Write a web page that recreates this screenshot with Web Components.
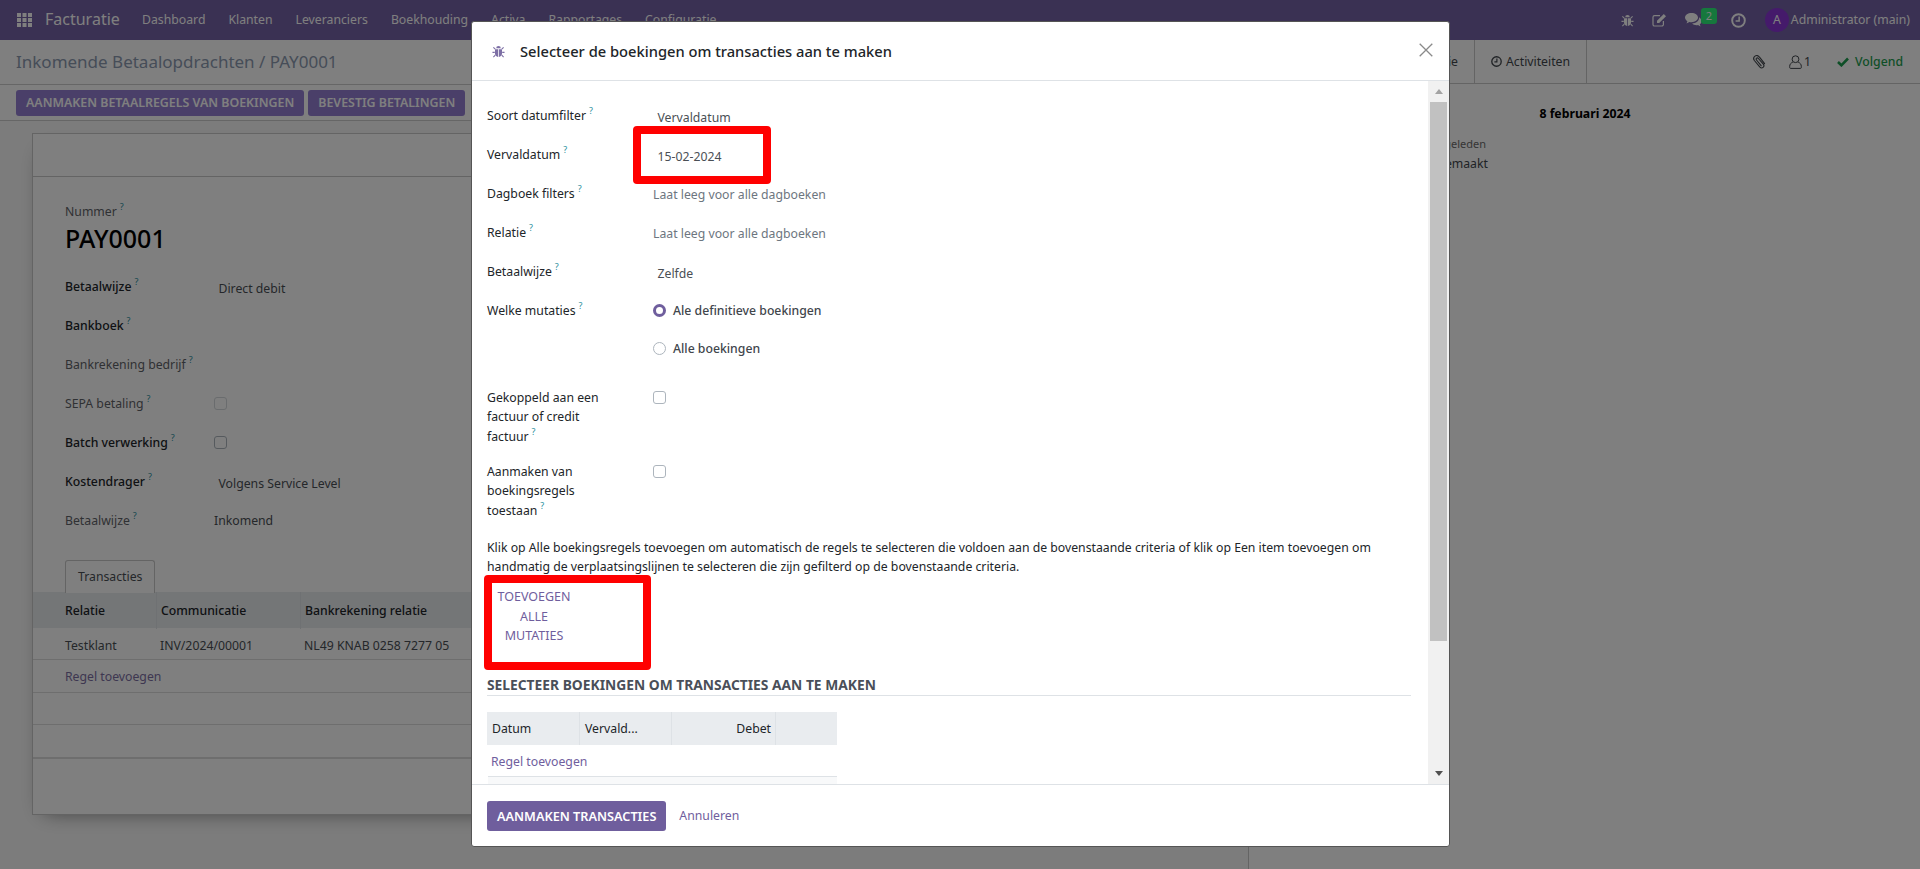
<!DOCTYPE html>
<html lang="nl">
<head>
<meta charset="utf-8">
<title>Facturatie</title>
<style>
    html, body { margin: 0; height: 100%; overflow: hidden; }
    body { font: 12.25px/19.5px "Noto Sans", "Open Sans", sans-serif; color: #212529; background: #f9f9f9; }
</style>
</head>
<body>
<app-page></app-page>

<script>
// ICONS (small fa-like set)
const ICONS = {
    grid: `<svg viewBox="0 0 15 14" width="15" height="14" fill="currentColor"><rect width="4" height="4"/><rect x="5.5" width="4" height="4"/><rect x="11" width="4" height="4"/><rect y="5" width="4" height="4"/><rect x="5.5" y="5" width="4" height="4"/><rect x="11" y="5" width="4" height="4"/><rect y="10" width="4" height="4"/><rect x="5.5" y="10" width="4" height="4"/><rect x="11" y="10" width="4" height="4"/></svg>`,
    bug: `<svg viewBox="0 0 14 14" width="13" height="13"><g fill="none" stroke="currentColor" stroke-width="1.2"><path d="M3.5 4.5 1.5 2.5M10.5 4.5l2-2M3 8H.5M11 8h2.500M3.500 11l-2 2M10.500 11l2 2"/></g><path fill="currentColor" d="M4.500 3.600a2.500 2.500 0 0 1 5 0zM3.200 4.500h3.400v8.500C4.500 12.800 3.200 11.200 3.200 9zM7.400 4.500h3.400V9c0 2.200-1.300 3.800-3.400 4z"/></svg>`,
    edit: `<svg viewBox="0 0 15 14" width="15" height="14"><path fill="none" stroke="currentColor" stroke-width="1.200" d="M8 2.600H2.600A1.600 1.600 0 0 0 1 4.200v7.200A1.600 1.600 0 0 0 2.600 13h7.200a1.600 1.600 0 0 0 1.600-1.600V8"/><path fill="currentColor" d="M5 7.800 11.800 1l2.200 2.200L7.200 10H5z"/></svg>`,
    comments: `<svg viewBox="0 0 17 14" width="17" height="14" fill="currentColor"><path d="M6.500 0C3 0 0 2 0 4.600c0 1.500 1 2.800 2.400 3.600L1.500 10.400l2.900-1.500c.7.200 1.400.300 2.100.300 3.600 0 6.500-2 6.500-4.600S10.100 0 6.500 0z"/><path d="M14 4.200c.1.300.1.500.1.800 0 3-3.100 5.300-7 5.500 1 1 2.700 1.700 4.400 1.700.5 0 1-.1 1.500-.2l2.500 1.500-.7-2.200c1.100-.7 1.700-1.700 1.700-2.800 0-1.800-1-3.300-2.500-4.300z"/></svg>`,
    clock: `<svg viewBox="0 0 14 14" width="15" height="15"><circle cx="7" cy="7" r="5.900" fill="none" stroke="currentColor" stroke-width="1.800"/><path fill="none" stroke="currentColor" stroke-width="1.400" d="M7.600 3.200v4.300H4.300"/></svg>`,
    clockThin: `<svg viewBox="0 0 14 14" width="11" height="11"><circle cx="7" cy="7" r="6" fill="none" stroke="currentColor" stroke-width="1.700"/><path fill="none" stroke="currentColor" stroke-width="1.500" d="M7.500 3.200v4.300H4.300"/></svg>`,
    clip: `<svg viewBox="0 0 14 15" width="14" height="15"><path fill="none" stroke="currentColor" stroke-width="1.100" stroke-linecap="round" d="M12.600 9.600 7.500 3.200C6.400 1.600 4.500 1 3 2.100 1.500 3.200 1.300 5 2.400 6.500l5.300 6.400c.9 1 2.300 1.400 3.400.5 1.100-.9 1-2.200.2-3.200L6.400 4.500c-.5-.6-1.200-.8-1.800-.3-.6.500-.6 1.200-.1 1.800l4.600 5.700"/></svg>`,
    user: `<svg viewBox="0 0 13 14" width="13" height="14"><g fill="none" stroke="currentColor" stroke-width="1"><circle cx="6.500" cy="4.200" r="3.400"/><path d="M3.800 7.200C2 7.800.7 9.300.7 11.300v1.200c0 .5.300.9.800.9h10c.5 0 .8-.4.800-.9v-1.200c0-2-1.300-3.500-3.100-4.100"/></g></svg>`,
    check: `<svg viewBox="0 0 12 10" width="12" height="10"><path fill="none" stroke="currentColor" stroke-width="2.600" d="M1 5l3.400 3.300L11 1.500"/></svg>`,
    close: `<svg viewBox="0 0 14 14" width="14" height="14"><path fill="none" stroke="currentColor" stroke-width="1.300" d="M.7.700l12.600 12.600M13.300.700.7 13.300"/></svg>`
};

// FIELD LABEL
class FieldLabel extends HTMLElement {
    constructor() {
        super();
        this.attachShadow({ mode: "open" });
        this.shadowRoot.innerHTML = `
            <style>
                :host { display: block; color: #5f6368; }
                :host([strong]) { color: #212529; font-weight: 500; }
                :host([plain]) { color: #212529; }
                sup {
                    font-size: 9px;
                    line-height: 0;
                    color: #2c8f9e;
                    margin-left: 3px;
                    font-weight: 400;
                    vertical-align: 6px;
                }
            </style>
            <slot></slot><sup>?</sup>
        `;
    }
}
customElements.define("field-label", FieldLabel);

// FORM ROW
class FormRow extends HTMLElement {
    constructor() {
        super();
        this.attachShadow({ mode: "open" });
        this.shadowRoot.innerHTML = `
            <style>
                :host {
                    display: grid;
                    grid-template-columns: var(--label-w, 166px) 1fr;
                    padding: 9.75px 0;
                }
                :host([tall]) { padding-bottom: 6px; }
                :host([open]) { padding-bottom: 1px; }
                .label { padding-right: var(--label-pad, 30px); }
            </style>
            <div class="label"><slot name="label"></slot></div>
            <div><slot></slot></div>
        `;
    }
}
customElements.define("form-row", FormRow);

// FIELD VALUE
class FieldValue extends HTMLElement {
    constructor() {
        super();
        this.attachShadow({ mode: "open" });
        this.shadowRoot.innerHTML = `
            <style>
                :host { display: block; color: #4a4f55; position: relative; top: 2px; }
                :host([inset]) { padding-left: 4.500px; }
                :host([empty]) { color: #6d7680; top: 1px; }
                :host([flat]) { top: 0; }
            </style>
            <slot></slot>
        `;
    }
}
customElements.define("field-value", FieldValue);

// CHECK BOX
class CheckBox extends HTMLElement {
    constructor() {
        super();
        this.attachShadow({ mode: "open" });
        this.shadowRoot.innerHTML = `
            <style>
                :host {
                    display: block;
                    box-sizing: border-box;
                    width: 13px;
                    height: 13px;
                    margin-top: 3px;
                    border: 1px solid #adb5bd;
                    border-radius: 3px;
                    background: #fff;
                }
                :host([faint]) { border-color: #d4d8dc; }
            </style>
        `;
    }
}
customElements.define("check-box", CheckBox);

// RADIO ITEM
class RadioItem extends HTMLElement {
    constructor() {
        super();
        this.attachShadow({ mode: "open" });
        this.shadowRoot.innerHTML = `
            <style>
                :host {
                    display: flex;
                    align-items: center;
                    gap: 7px;
                    color: #41464c;
                    margin-bottom: 18.5px;
                    font-weight: 500;
                }
                i {
                    box-sizing: border-box;
                    width: 13px;
                    height: 13px;
                    border: 1px solid #adb5bd;
                    border-radius: 50%;
                    background: #fff;
                }
                :host([on]) i { border: 3.500px solid #6f5e9d; }
            </style>
            <i></i><slot></slot>
        `;
    }
}
customElements.define("radio-item", RadioItem);

// RED MARK (annotation drawn over the screenshot)
class RedMark extends HTMLElement {
    constructor() {
        super();
        this.attachShadow({ mode: "open" });
        this.shadowRoot.innerHTML = `
            <style>
                :host { display: block; position: relative; }
                .frame {
                    position: absolute;
                    inset: var(--inset);
                    border: 8px solid #ff0000;
                    border-radius: 4px;
                    pointer-events: none;
                }
            </style>
            <slot></slot>
            <div class="frame"></div>
        `;
    }
}
customElements.define("red-mark", RedMark);

// FAKE SCROLLBAR
class FakeScrollbar extends HTMLElement {
    constructor() {
        super();
        this.attachShadow({ mode: "open" });
        this.shadowRoot.innerHTML = `
            <style>
                :host {
                    display: flex;
                    flex-direction: column;
                    align-items: center;
                    flex: none;
                    width: 21px;
                    background: #f1f1f1;
                }
                .btn { flex: none; height: 21px; display: flex; align-items: center; justify-content: center; }
                .up { width: 0; height: 0; border: 4.500px solid transparent; border-top: 0; border-bottom: 5px solid #a3a3a3; }
                .down { width: 0; height: 0; border: 4.500px solid transparent; border-bottom: 0; border-top: 5px solid #505050; }
                .thumb { flex: none; width: 17px; height: 539px; background: #c1c1c1; }
                .rest { flex: 1; }
            </style>
            <div class="btn"><div class="up"></div></div>
            <div class="thumb"></div>
            <div class="rest"></div>
            <div class="btn"><div class="down"></div></div>
        `;
    }
}
customElements.define("fake-scrollbar", FakeScrollbar);

// NAVBAR
class AppNavbar extends HTMLElement {
    constructor() {
        super();
        this.attachShadow({ mode: "open" });
        this.shadowRoot.innerHTML = `
            <style>
                :host {
                    display: flex;
                    align-items: center;
                    flex: none;
                    height: 40px;
                    background: #7462a6;
                    color: #fff;
                    padding: 0 10px 0 17px;
                    box-sizing: border-box;
                    position: relative;
                }
                .brand { font-size: 16px; margin-left: 13px; width: 97px; }
                nav { display: flex; gap: 23px; }
                .grid, .icon { display: flex; }
                .right { margin-left: auto; display: flex; align-items: center; }
                .icon { position: relative; }
                .bug { margin-right: 18px; }
                .edit { margin-right: 18px; }
                .comments { margin-right: 29px; }
                .clock { margin-right: 19px; }
                .badge {
                    position: absolute;
                    left: 16px;
                    top: -5px;
                    width: 16px;
                    height: 16px;
                    border-radius: 3px;
                    background: #2cf07a;
                    color: #fff;
                    font-size: 11px;
                    line-height: 15px;
                    text-align: center;
                }
                .avatar {
                    width: 24px;
                    height: 24px;
                    border-radius: 50%;
                    background: #8a35d6;
                    text-align: center;
                    line-height: 24px;
                    margin-right: 2px;
                }
            </style>
            <span class="grid">${ICONS.grid}</span>
            <span class="brand">Facturatie</span>
            <nav>
                <span>Dashboard</span>
                <span>Klanten</span>
                <span>Leveranciers</span>
                <span>Boekhouding</span>
                <span>Activa</span>
                <span>Rapportages</span>
                <span>Configuratie</span>
            </nav>
            <div class="right">
                <span class="icon bug">${ICONS.bug}</span>
                <span class="icon edit">${ICONS.edit}</span>
                <span class="icon comments">${ICONS.comments}<span class="badge">2</span></span>
                <span class="icon clock">${ICONS.clock}</span>
                <span class="avatar">A</span>
                <span>Administrator (main)</span>
            </div>
        `;
    }
}
customElements.define("app-navbar", AppNavbar);

// CONTROL PANEL
class ControlPanel extends HTMLElement {
    constructor() {
        super();
        this.attachShadow({ mode: "open" });
        this.shadowRoot.innerHTML = `
            <style>
                :host { display: block; background: #fff; border-bottom: 1px solid #ccc; }
                .crumbs {
                    height: 44px;
                    padding: 0 16px;
                    display: flex;
                    align-items: center;
                    font-size: 17px;
                    color: #8c9ab0;
                    border-bottom: 1px solid #ccc;
                }
                .buttons { display: flex; gap: 4px; padding: 5px 16px 4px; }
                button {
                    height: 26px;
                    padding: 0 10px;
                    border: 0;
                    border-radius: 3px;
                    background: #947fd2;
                    color: #fff;
                    font: 600 12.4px/26px "Noto Sans", sans-serif;
                    white-space: nowrap;
                }
            </style>
            <div class="crumbs">Inkomende Betaalopdrachten / PAY0001</div>
            <div class="buttons">
                <button>AANMAKEN BETAALREGELS VAN BOEKINGEN</button>
                <button>BEVESTIG BETALINGEN</button>
            </div>
        `;
    }
}
customElements.define("control-panel", ControlPanel);

// FORM SHEET
class FormSheet extends HTMLElement {
    constructor() {
        super();
        this.attachShadow({ mode: "open" });
        this.shadowRoot.innerHTML = `
            <style>
                :host {
                    display: block;
                    margin: 12px 33px 0 32px;
                    height: 682px;
                    background: #fff;
                    border: 1px solid #c8c8c8;
                    box-sizing: border-box;
                    box-shadow: 0 8px 20px -12px rgba(0,0,0,.6);
                }
                .status { height: 42px; border-bottom: 1px solid #c8c8c8; }
                .inner { padding: 25px 32px 0; }
                .title { font-size: 25px; font-weight: 500; line-height: 33px; color: #000; margin: 0 0 13px; }
                form-row { --label-w: 149px; --label-pad: 0px; }
                .tab {
                    display: block;
                    width: fit-content;
                    box-sizing: border-box;
                    height: 33px;
                    padding: 6px 12px;
                    margin-top: 18.5px;
                    border: 1px solid #c8c8c8;
                    border-bottom: 0;
                    border-radius: 3px 3px 0 0;
                    color: #4a4f55;
                    position: relative;
                    top: 1px;
                    background: #fff;
                }
                .row { display: grid; grid-template-columns: 123px 144px 1fr; border-bottom: 1px solid #dcdcdc; color: #4a4f55; white-space: nowrap; }
                .row span { padding-left: 4px; }
                .row span:first-child { padding-left: 32px; }
                .head { background: #e9ecef; height: 36px; line-height: 37px; color: #212529; font-weight: 500; border-bottom: 0; }
                .head span + span { border-left: 1px solid #dee2e6; }
                .r1 { height: 31px; line-height: 35px; }
                .r2 { height: 32px; line-height: 33px; color: #7c6fa3; }
                .r3 { height: 31px; }
                .r4 { height: 32px; border-bottom-width: 2px; }
            </style>
            <div class="status"></div>
            <div class="inner">
                <field-label>Nummer</field-label>
                <div class="title">PAY0001</div>
                <form-row><field-label slot="label" strong>Betaalwijze</field-label><field-value inset>Direct debit</field-value></form-row>
                <form-row><field-label slot="label" strong>Bankboek</field-label></form-row>
                <form-row><field-label slot="label">Bankrekening bedrijf</field-label></form-row>
                <form-row><field-label slot="label">SEPA betaling</field-label><check-box faint></check-box></form-row>
                <form-row><field-label slot="label" strong>Batch verwerking</field-label><check-box></check-box></form-row>
                <form-row><field-label slot="label" strong>Kostendrager</field-label><field-value inset>Volgens Service Level</field-value></form-row>
                <form-row><field-label slot="label">Betaalwijze</field-label><field-value flat>Inkomend</field-value></form-row>
                <div class="tab">Transacties</div>
            </div>
            <div class="row head"><span>Relatie</span><span>Communicatie</span><span>Bankrekening relatie</span></div>
            <div class="row r1"><span>Testklant</span><span>INV/2024/00001</span><span>NL49 KNAB 0258 7277 05</span></div>
            <div class="row r2"><span>Regel toevoegen</span></div>
            <div class="row r3"></div>
            <div class="row r4"></div>
        `;
    }
}
customElements.define("form-sheet", FormSheet);

// CHATTER
class ChatterPane extends HTMLElement {
    constructor() {
        super();
        this.attachShadow({ mode: "open" });
        this.shadowRoot.innerHTML = `
            <style>
                :host {
                    display: block;
                    flex: none;
                    width: 672px;
                    box-sizing: border-box;
                    background: #fff;
                    border-left: 1px solid #c8c8c8;
                }
                .top {
                    display: flex;
                    align-items: center;
                    height: 44px;
                    box-sizing: border-box;
                    border-bottom: 1px solid #c8c8c8;
                    padding-right: 17px;
                    color: #41464c;
                }
                .tab {
                    display: flex;
                    align-items: center;
                    gap: 4px;
                    height: 100%;
                    padding: 0 16px;
                    border-right: 1px solid #c8c8c8;
                }
                .note { box-sizing: border-box; width: 226px; justify-content: flex-end; }
                .tools { margin-left: auto; display: flex; align-items: center; }
                .tools svg { display: block; }
                .follow { color: #1d9e4f; display: flex; align-items: center; gap: 6px; font-weight: 500; }
                .clip { margin-right: 23px; }
                .users { display: flex; align-items: center; gap: 2px; margin-right: 26px; }
                .date { text-align: center; font-weight: 700; color: #000; margin-top: 20px; width: 672px; padding-left: 0; }
                .msg { margin: 10px 0 0 125px; color: #41464c; }
                .ago { font-size: 11px; color: #6c6c6c; display: block; line-height: 20px; padding-left: 9px; }
            </style>
            <div class="top">
                <span class="tab note">Notitie</span>
                <span class="tab">${ICONS.clockThin} Activiteiten</span>
                <div class="tools">
                    <span class="clip">${ICONS.clip}</span>
                    <span class="users">${ICONS.user}<span>1</span></span>
                    <span class="follow">${ICONS.check} Volgend</span>
                </div>
            </div>
            <div class="date">8 februari 2024</div>
            <div class="msg"><span class="ago">2 maanden geleden</span>Document gemaakt</div>
        `;
    }
}
customElements.define("chatter-pane", ChatterPane);

// MODAL
class BookingModal extends HTMLElement {
    constructor() {
        super();
        this.attachShadow({ mode: "open" });
        this.shadowRoot.innerHTML = `
            <style>
                :host {
                    position: absolute;
                    left: 471px;
                    top: 21px;
                    width: 979px;
                    height: 826px;
                    box-sizing: border-box;
                    display: flex;
                    flex-direction: column;
                    background: #fff;
                    border: 1px solid #555;
                    border-radius: 3px;
                    overflow: hidden;
                }
                header {
                    flex: none;
                    height: 59px;
                    box-sizing: border-box;
                    border-bottom: 1px solid #dee2e6;
                    display: flex;
                    align-items: center;
                    padding: 0 16px 0 20px;
                }
                .bug { display: flex; color: #7d6fa5; margin-right: 15px; }
                h4 { margin: 0; font-size: 14.7px; font-weight: 500; line-height: 24px; color: #212529; flex: 1; }
                .close { display: flex; color: #8a8a8a; margin-right: 0; position: relative; top: -1px; }
                .middle { flex: 1; min-height: 0; display: flex; }
                .content { flex: 1; min-width: 0; overflow: hidden; padding: 15px 17px 0 15px; box-sizing: border-box; }
                p { margin: 12px 0 11px; line-height: 19px; width: 925px; }
                .add {
                    display: block;
                    width: 94px;
                    box-sizing: border-box;
                    padding: 0 9px;
                    text-align: center;
                    font-size: 12.5px;
                    color: #6f5e9d;
                }
                h5 {
                    margin: 29px 0 16px;
                    border-bottom: 1px solid #dee2e6;
                    font-size: 13.8px;
                    font-weight: 700;
                    line-height: 20px;
                    color: #4a4f59;
                }
                .table { width: 350px; }
                .thead {
                    display: grid;
                    grid-template-columns: 92px 92px 104px 1fr;
                    height: 33px;
                    line-height: 33px;
                    background: #e9ecef;
                    color: #212529;
                }
                .thead span { padding: 0 4px 0 5px; }
                .thead span + span { border-left: 1px solid #dee2e6; }
                .num { text-align: right; }
                .add-line {
                    margin-left: 1px;
                    height: 31px;
                    line-height: 33px;
                    padding-left: 3px;
                    border-bottom: 1px solid #dee2e6;
                    color: #6f5e9d;
                }
                .stripe { margin-left: 1px; height: 10px; background: #f8f9fa; }
                footer {
                    flex: none;
                    height: 62px;
                    box-sizing: border-box;
                    border-top: 1px solid #dee2e6;
                    padding: 16px 15px;
                    display: flex;
                    align-items: flex-start;
                    gap: 13px;
                }
                .primary {
                    height: 30px;
                    padding: 0 10px;
                    border: 0;
                    border-radius: 3px;
                    background: #6f5e9d;
                    color: #fff;
                    font: 600 12.7px/30px "Noto Sans", sans-serif;
                }
                .cancel { line-height: 30px; color: #6f5e9d; }
            </style>
            <header>
                <span class="bug">${ICONS.bug}</span>
                <h4>Selecteer de boekingen om transacties aan te maken</h4>
                <span class="close">${ICONS.close}</span>
            </header>
            <div class="middle">
                <div class="content">
                    <form-row><field-label slot="label" plain>Soort datumfilter</field-label><field-value inset>Vervaldatum</field-value></form-row>
                    <form-row>
                        <field-label slot="label" plain>Vervaldatum</field-label>
                        <red-mark style="--inset: -19px -8px -20px -20px; width: 110px"><field-value inset>15-02-2024</field-value></red-mark>
                    </form-row>
                    <form-row><field-label slot="label" plain>Dagboek filters</field-label><field-value empty>Laat leeg voor alle dagboeken</field-value></form-row>
                    <form-row><field-label slot="label" plain>Relatie</field-label><field-value empty>Laat leeg voor alle dagboeken</field-value></form-row>
                    <form-row><field-label slot="label" plain>Betaalwijze</field-label><field-value inset>Zelfde</field-value></form-row>
                    <form-row open>
                        <field-label slot="label" plain>Welke mutaties</field-label>
                        <radio-item on>Ale definitieve boekingen</radio-item>
                        <radio-item>Alle boekingen</radio-item>
                    </form-row>
                    <form-row tall><field-label slot="label" plain>Gekoppeld aan een factuur of credit factuur</field-label><check-box></check-box></form-row>
                    <form-row tall><field-label slot="label" plain>Aanmaken van boekingsregels toestaan</field-label><check-box></check-box></form-row>
                    <p>Klik op Alle boekingsregels toevoegen om automatisch de regels te selecteren die voldoen aan de bovenstaande criteria of klik op Een item toevoegen om handmatig de verplaatsingslijnen te selecteren die zijn gefilterd op de bovenstaande criteria.</p>
                    <red-mark style="--inset: -12px -70px -24px -3px; width: 94px"><span class="add">TOEVOEGEN ALLE MUTATIES</span></red-mark>
                    <h5>SELECTEER BOEKINGEN OM TRANSACTIES AAN TE MAKEN</h5>
                    <div class="table">
                        <div class="thead"><span>Datum</span><span>Vervald...</span><span class="num">Debet</span><span></span></div>
                        <div class="add-line">Regel toevoegen</div>
                        <div class="stripe"></div>
                    </div>
                </div>
                <fake-scrollbar></fake-scrollbar>
            </div>
            <footer>
                <button class="primary">AANMAKEN TRANSACTIES</button>
                <span class="cancel">Annuleren</span>
            </footer>
        `;
    }
}
customElements.define("booking-modal", BookingModal);

// PAGE
class AppPage extends HTMLElement {
    constructor() {
        super();
        this.attachShadow({ mode: "open" });
        this.shadowRoot.innerHTML = `
            <style>
                :host { display: flex; flex-direction: column; height: 869px; position: relative; overflow: hidden; }
                .main { flex: 1; min-height: 0; display: flex; }
                .left { flex: 1; min-width: 0; }
                .backdrop { position: absolute; inset: 0; background: rgba(0,0,0,.5); }
            </style>
            <app-navbar></app-navbar>
            <div class="main">
                <div class="left">
                    <control-panel></control-panel>
                    <form-sheet></form-sheet>
                </div>
                <chatter-pane></chatter-pane>
            </div>
            <div class="backdrop"></div>
            <booking-modal></booking-modal>
        `;
    }
}
customElements.define("app-page", AppPage);
</script>
</body>
</html>
